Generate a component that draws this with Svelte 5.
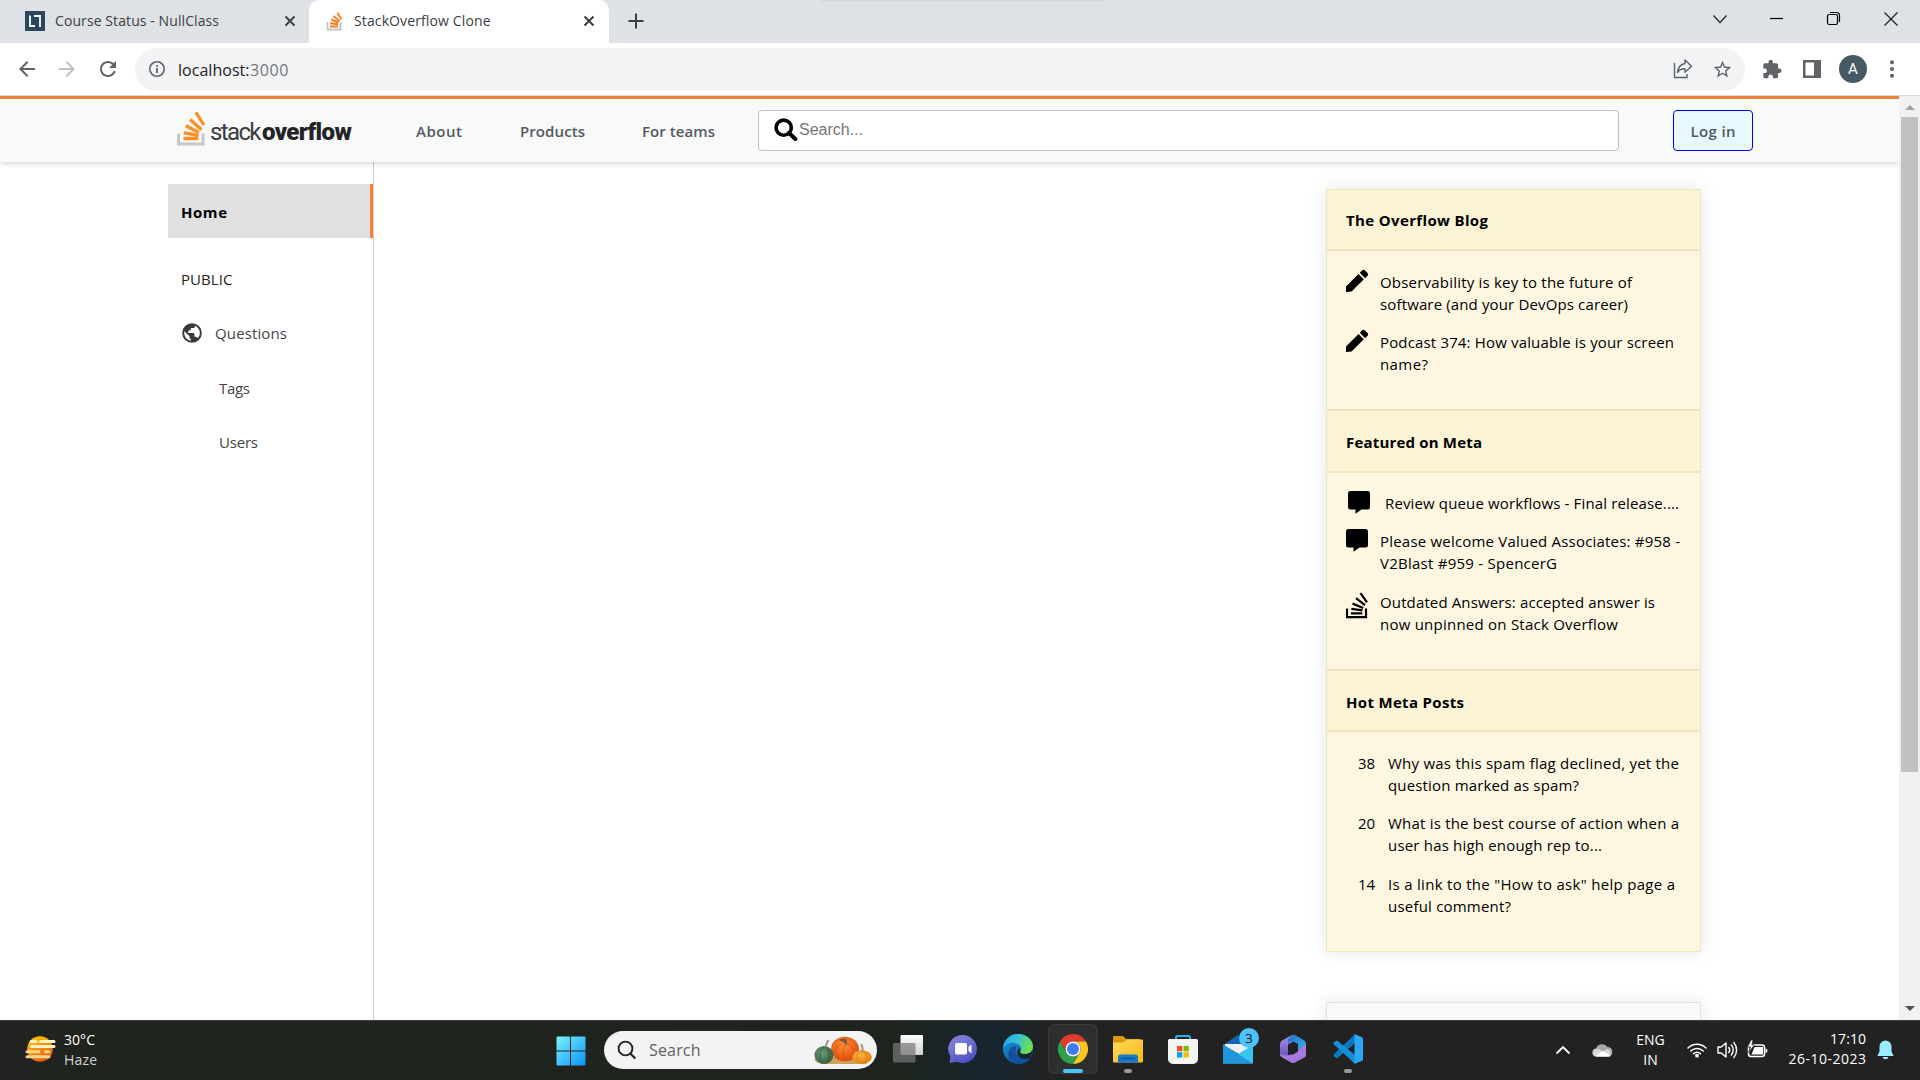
<script>
  // Spreads the letters of a single line so that it fills the given width.
  function fit(node, width) {
    const natural = node.getBoundingClientRect().width;
    const gaps = node.textContent.length - 1;
    node.style.letterSpacing = `${(width - natural) / gaps}px`;
    node.style.marginRight = `${-(width - natural) / gaps}px`;
  }

  const navLinks = [
    { label: 'About', width: 46, cls: 'about' },
    { label: 'Products', width: 65, cls: 'products' },
    { label: 'For teams', width: 73, cls: 'teams' },
  ];

  const sections = [
    {
      title: 'The Overflow Blog', width: 142, cls: 'blog',
      items: [
        { icon: 'pen', lines: [['Observability is key to the future of', 252], ['software (and your DevOps career)', 248]] },
        { icon: 'pen', lines: [['Podcast 374: How valuable is your screen', 294], ['name?', 48]] },
      ],
    },
    {
      title: 'Featured on Meta', width: 136, cls: 'meta',
      items: [
        { icon: 'comment', inset: true, lines: [['Review queue workflows - Final release....', 294]] },
        { icon: 'comment', lines: [['Please welcome Valued Associates: #958 -', 300], ['V2Blast #959 - SpencerG', 177]] },
        { icon: 'stack', lines: [['Outdated Answers: accepted answer is', 275], ['now unpinned on Stack Overflow', 238]] },
      ],
    },
    {
      title: 'Hot Meta Posts', width: 118, cls: 'hot',
      items: [
        { count: '38', lines: [['Why was this spam flag declined, yet the', 291], ['question marked as spam?', 191]] },
        { count: '20', lines: [['What is the best course of action when a', 291], ['user has high enough rep to...', 214]] },
        { count: '14', lines: [['Is a link to the "How to ask" help page a', 287], ['useful comment?', 123]] },
      ],
    },
  ];
</script>

<div class="screen">
  <header class="tabstrip">
    <div class="tab idle">
      <svg class="fav" width="20" height="20" viewBox="0 0 20 20"><rect width="20" height="20" fill="#2a475e" /><path d="M5 4.500v10.500h5M9 5h6v11" fill="none" stroke="#fff" stroke-width="1.800" /></svg>
      <span class="title"><span use:fit={164}>Course Status - NullClass</span></span>
      <svg class="x" width="12" height="12" viewBox="0 0 12 12"><path d="M1.500 1.500l9 9M10.500 1.500l-9 9" stroke="#3c4043" stroke-width="2" /></svg>
    </div>
    <div class="tab active">
      <svg class="fav so" width="20" height="20" viewBox="0 0 20 20"><path d="M2.500 11v7.500h13V11" fill="none" stroke="#c4c4c4" stroke-width="1.800" /><path d="M5 15.500h8M5 12.300l8 1M6.200 8.500l7.300 3M8.600 5l6 5.300M12.300 1.800l4.200 6.500" stroke="#f48024" stroke-width="1.900" /></svg>
      <span class="title"><span use:fit={136.5}>StackOverflow Clone</span></span>
      <svg class="x" width="12" height="12" viewBox="0 0 12 12"><path d="M1.500 1.500l9 9M10.500 1.500l-9 9" stroke="#3c4043" stroke-width="2" /></svg>
    </div>
    <svg class="plus" width="16" height="16" viewBox="0 0 16 16"><path d="M8 0.500v15M.5 8h15" stroke="#3c4043" stroke-width="2" /></svg>
    <div class="flyout"></div>
    <div class="window-buttons">
      <svg width="57" height="38" viewBox="0 0 57 38"><path d="M22.500 15.500l6.500 7 6.500-7" fill="none" stroke="#222" stroke-width="1.200" /></svg>
      <svg width="57" height="38" viewBox="0 0 57 38"><path d="M22 18.500h13" stroke="#000" stroke-width="1.200" /></svg>
      <svg width="57" height="38" viewBox="0 0 57 38"><g fill="none" stroke="#000" stroke-width="1.200"><rect x="22.500" y="14.500" width="10" height="10" rx="1.800" /><path d="M25 12.500h6.500a3 3 0 013 3V22" /></g></svg>
      <svg width="57" height="38" viewBox="0 0 57 38"><path d="M22.500 12.500l13 13M35.500 12.500l-13 13" stroke="#222" stroke-width="1.300" /></svg>
    </div>
  </header>

  <div class="toolbar">
    <svg class="tool" viewBox="0 0 24 24"><path fill="#5f6368" d="M20 11H7.830l5.590-5.590L12 4l-8 8 8 8 1.410-1.410L7.830 13H20z" /></svg>
    <svg class="tool" viewBox="0 0 24 24"><path fill="#bdc1c6" d="M4 11h12.170l-5.590-5.590L12 4l8 8-8 8-1.410-1.410L16.170 13H4z" /></svg>
    <svg class="tool reload" viewBox="0 0 24 24"><path fill="#5f6368" d="M17.650 6.350C16.200 4.900 14.210 4 12 4c-4.420 0-7.990 3.580-7.990 8s3.570 8 7.990 8c3.730 0 6.840-2.550 7.730-6h-2.080c-.82 2.330-3.040 4-5.650 4-3.310 0-6-2.690-6-6s2.690-6 6-6c1.660 0 3.140.69 4.220 1.780L13 11h7V4l-2.350 2.350z" /></svg>
    <div class="omnibox">
      <svg class="info" width="18" height="18" viewBox="0 0 18 18"><circle cx="9" cy="9" r="7.200" fill="none" stroke="#5f6368" stroke-width="1.600" /><path d="M9 8v5M9 5v1.700" stroke="#5f6368" stroke-width="1.800" /></svg>
      <span class="host"><span use:fit={71.5}>localhost:</span></span><span class="port"><span use:fit={38.5}>3000</span></span>
      <svg class="share" width="20" height="22" viewBox="0 0 20 22"><g fill="none" stroke="#5f6368" stroke-width="1.400"><path d="M1.500 5v14.500h12.500V16" /><path d="M12 2l6.500 6.200-6.500 6V10.800c-3.800 0-6.200 1.400-7.500 3.700C5 9.500 7.500 6.300 12 5.500z" stroke-linejoin="round" /></g></svg>
      <svg class="star" width="21" height="21" viewBox="0 0 24 24"><path fill="#5f6368" d="M22 9.240l-7.190-.62L12 2 9.190 8.630 2 9.240l5.460 4.730L5.820 21 12 17.270 18.180 21l-1.630-7.030L22 9.240zM12 15.400l-3.760 2.270 1-4.280-3.320-2.880 4.380-.38L12 6.100l1.710 4.040 4.380.38-3.320 2.880 1 4.280L12 15.400z" /></svg>
    </div>
    <svg class="ext" width="20" height="20" viewBox="0.500 0 23 23"><path fill="#5f6368" d="M20.500 11H19V7c0-1.100-.9-2-2-2h-4V3.500C13 2.120 11.880 1 10.500 1S8 2.120 8 3.500V5H4c-1.100 0-1.990.9-1.990 2v3.800H3.500c1.490 0 2.700 1.210 2.700 2.700s-1.210 2.700-2.700 2.700H2V20c0 1.100.9 2 2 2h3.800v-1.500c0-1.490 1.210-2.700 2.700-2.700 1.490 0 2.700 1.210 2.700 2.700V22H17c1.100 0 2-.9 2-2v-4h1.500c1.380 0 2.500-1.120 2.500-2.500S21.880 11 20.500 11z" /></svg>
    <svg class="panel" width="18" height="18" viewBox="0 0 18 18"><path fill="#5f6368" fill-rule="evenodd" d="M0 0h18v18H0zM2.500 2.500v13H11v-13z" /></svg>
    <div class="avatar">A</div>
    <svg class="dots" width="4" height="18" viewBox="0 0 4 18"><g fill="#5f6368"><circle cx="2" cy="2.200" r="2" /><circle cx="2" cy="9" r="2" /><circle cx="2" cy="15.800" r="2" /></g></svg>
  </div>

  <div class="viewport">
    <div class="page">
      <nav class="navbar">
        <div class="logo">
          <svg width="32" height="38" viewBox="0 0 32 38"><path d="M1.500 23.500v10.500H26V23.500" fill="none" stroke="#c6c6c6" stroke-width="3" /><path d="M6.500 28.500h14.800M6.800 22.800l14.700 2.600M8.800 15.800L22 22.400M13.200 9.500L24.500 19.800M19 2.500L26.800 15" stroke="#fb8f28" stroke-width="3.300" /></svg>
          <span class="word"><span use:fit={51.5}>stack</span></span><b class="word"><span use:fit={89.5}>overflow</span></b>
        </div>
        {#each navLinks as link}
          <a class="link {link.cls}"><span use:fit={link.width}>{link.label}</span></a>
        {/each}
        <div class="search">
          <svg width="24" height="24" viewBox="0 0 24 24"><circle cx="9.700" cy="9.700" r="7.600" fill="none" stroke="#000" stroke-width="3.600" /><path d="M15 15l6.300 6" stroke="#000" stroke-width="4" stroke-linecap="round" /></svg>
          <span class="placeholder"><span use:fit={64}>Search...</span></span>
        </div>
        <button class="login"><span use:fit={45}>Log in</span></button>
      </nav>

      <div class="body">
        <aside class="left">
          <div class="side home"><span use:fit={46}>Home</span></div>
          <div class="side public"><span use:fit={51.5}>PUBLIC</span></div>
          <div class="side questions">
            <svg width="22" height="22" viewBox="0 0 18 18"><path fill="#3a3a3a" d="M9 1a8 8 0 100 16A8 8 0 009 1zM8 15.320a6.400 6.400 0 01-5.230-7.750L7 11.680v.8c0 .88.12 1.320 1 1.320v1.520zm5.720-2c-.2-.66-1-1.320-1.720-1.320h-1v-2c0-.44-.56-1-1-1H6V7h1c.44 0 1-.56 1-1V5h2c.88 0 1.400-.72 1.400-1.600v-.33a6.400 6.400 0 012.320 10.240z" /></svg>
            <span use:fit={72}>Questions</span>
          </div>
          <div class="side tags"><span use:fit={31}>Tags</span></div>
          <div class="side users"><span use:fit={39}>Users</span></div>
        </aside>

        <aside class="right">
          <div class="card">
            {#each sections as section}
              <h4 class={section.cls}><span use:fit={section.width}>{section.title}</span></h4>
              <div class="content {section.cls}">
                {#each section.items as item}
                  <div class="item" class:inset={item.inset} class:counted={item.count}>
                    {#if item.icon === 'pen'}
                      <svg width="23" height="24" viewBox="0 0 23 24"><path d="M0 23v-5.500L12.500 5l5.300 5.300L5.500 22.600zM13.800 3.800L16 1.500c1-1 2-1 3 0L21.500 4c1 1 .9 2-.1 3l-2.300 2.200z" /></svg>
                    {:else if item.icon === 'comment'}
                      <svg width="23" height="24" viewBox="0 0 23 24"><path d="M2.500 1h17A2.500 2.500 0 0122 3.500V17a2.500 2.500 0 01-2.500 2.500h-6L7.500 23.800V19.500h-5A2.500 2.500 0 010 17V3.500A2.500 2.500 0 012.500 1z" /></svg>
                    {:else if item.icon === 'stack'}
                      <svg class="stack" width="23" height="28" viewBox="0 0 23 28"><path d="M1 17.500v8.700h19v-8.700M5 22.300h11.300M5.300 17.900l11.200 1.500M6.500 12.400l10.700 4.700M10 7.200l9 7M14.500 2.200l6.500 9.200" fill="none" stroke="#000" stroke-width="2.200" /></svg>
                    {:else}
                      <span class="count"><span use:fit={17}>{item.count}</span></span>
                    {/if}
                    <p>
                      {#each item.lines as [text, width]}
                        <span class="line"><span use:fit={width}>{text}</span></span>
                      {/each}
                    </p>
                  </div>
                {/each}
              </div>
            {/each}
          </div>
          <div class="card next"></div>
        </aside>
      </div>
    </div>
    <div class="scrollbar">
      <i class="up"></i>
      <div class="thumb"></div>
      <i class="down"></i>
    </div>
  </div>

  <footer class="taskbar">
    <div class="weather">
      <svg width="32" height="30" viewBox="0 0 32 30"><defs><linearGradient id="sun" x1="0" y1="0" x2=".6" y2="1"><stop offset="0" stop-color="#ffd60a" /><stop offset="1" stop-color="#e8590c" /></linearGradient></defs><circle cx="15" cy="15" r="12.800" fill="url(#sun)" /><g stroke-width="3" stroke-linecap="round"><path d="M6 7.500h5M15.500 7.500H29M6.500 12.500H29" stroke="#fff1c4" /><path d="M2 17.800h12M20.500 17.800h3.500M2 22.800h22" stroke="#f3d491" /></g></svg>
      <div><span class="w1"><span use:fit={31}>30°C</span></span><span class="w2"><span use:fit={33}>Haze</span></span></div>
    </div>

    <div class="apps">
      <svg class="win" width="30" height="30" viewBox="0 0 30 30"><defs><linearGradient id="win" x1="0" y1="0" x2="1" y2="1"><stop offset="0" stop-color="#7df3fd" /><stop offset="1" stop-color="#0893fb" /></linearGradient></defs><path fill="url(#win)" d="M1.500.500H14v14H.500v-13a1 1 0 011-1zM15 .500h13.500a1 1 0 011 1v13H15zM.500 15.500H14v14H1.500a1 1 0 01-1-1zM15 15.500h14.500v13a1 1 0 01-1 1H15z" /></svg>
      <div class="tasksearch">
        <svg width="20" height="20" viewBox="0 0 20 20"><circle cx="8.500" cy="8.500" r="6.900" fill="none" stroke="#222" stroke-width="1.900" /><path d="M13.300 13.500l5 5" stroke="#222" stroke-width="2.200" /></svg>
        <span class="ts"><span use:fit={51.5}>Search</span></span>
        <svg class="pumpkins" width="60" height="32" viewBox="0 0 60 32">
          <defs>
            <radialGradient id="po" cx=".45" cy=".35" r=".7"><stop offset="0" stop-color="#ff9238" /><stop offset="1" stop-color="#d9420b" /></radialGradient>
            <radialGradient id="pg" cx=".4" cy=".4" r=".7"><stop offset="0" stop-color="#6f9a74" /><stop offset="1" stop-color="#2f5540" /></radialGradient>
            <radialGradient id="py" cx=".4" cy=".35" r=".7"><stop offset="0" stop-color="#ffb640" /><stop offset="1" stop-color="#e27a0a" /></radialGradient>
          </defs>
          <path d="M1 25q26-6 54 4l-3 1H12Q3 30 1 25z" fill="#c9a35c" />
          <ellipse cx="32" cy="15" rx="14" ry="12.200" fill="url(#po)" />
          <path d="M29 10c-8 2-8 12-3 16M32 10c-2 5-2 12 0 17M34 10c8 2 8 12 4 16" fill="none" stroke="#dd5010" stroke-width=".8" />
          <path d="M27 6q3 0 6 4 1-3-1-5z" fill="#8d6b4d" stroke="#78573c" stroke-width="1.500" />
          <ellipse cx="11" cy="21" rx="9.500" ry="9" fill="url(#pg)" />
          <path d="M11 13c-5 4-5 12-1 17M13 13c4 4 4 12 0 17" fill="none" stroke="#315a42" stroke-width=".8" />
          <path d="M12.500 13q1-4 3-7" stroke="#a89080" stroke-width="2" fill="none" />
          <ellipse cx="49" cy="23" rx="9.800" ry="6.800" fill="url(#py)" />
          <path d="M48 17c-5 3-5 9-1 12M50 17c5 3 5 9 1 12" fill="none" stroke="#db780f" stroke-width=".8" />
          <path d="M49.500 18q.5-4-1-8" stroke="#b18c70" stroke-width="2" fill="none" />
        </svg>
      </div>
      <svg class="app" viewBox="0 0 36 36"><defs><linearGradient id="tv" x1="0" y1="0" x2="0" y2="1"><stop offset="0" stop-color="#fff" /><stop offset="1" stop-color="#d0d0d0" /></linearGradient></defs><rect x="10.500" y="4" width="22.500" height="20" rx="1" fill="url(#tv)" /><rect x="3" y="12" width="22.500" height="19.500" rx="1" fill="#777" opacity=".72" /></svg>
      <svg class="app" viewBox="0 0 36 36"><defs><linearGradient id="chat" x1="0" y1="0" x2=".6" y2="1"><stop offset="0" stop-color="#a06fb8" /><stop offset=".35" stop-color="#7679dc" /><stop offset="1" stop-color="#4d50c3" /></linearGradient></defs><path d="M18 4a14 14 0 11-6 26.700L4.500 32l1-6.500A14 14 0 0118 4z" fill="url(#chat)" /><rect x="10" y="12" width="12" height="11.500" rx="1.800" fill="#fff" /><path d="M23.500 16l3-2.500v9l-3-2.500z" fill="#fff" /></svg>
      <svg class="app" viewBox="0 0 36 36"><defs><linearGradient id="e1" x1="0" y1="0" x2="1" y2=".35"><stop offset="0" stop-color="#1fa2e8" /><stop offset=".5" stop-color="#35c1d8" /><stop offset="1" stop-color="#6be04e" /></linearGradient><linearGradient id="e2" x1="0" y1="0" x2=".5" y2="1"><stop offset="0" stop-color="#1c9be0" /><stop offset="1" stop-color="#0c59a4" /></linearGradient></defs><circle cx="18" cy="18" r="15" fill="url(#e2)" /><path d="M15.500 20c0 6 6 9.500 13 7.300l1.500.2C27 31.500 22 33.500 17 33c-6-1-9.500-6-8.500-11 .5-4 4-7 7.500-7z" fill="#124f9c" /><path d="M3 17C3.500 9 10 3 18 3c9 0 15 6 15 12.500 0 5-4 7.500-8 7.500-4 0-6-1.500-4.500-3.200 1-1.300 1-3.300-.5-5C16.500 10.500 7 10 3 17z" fill="url(#e1)" /><path d="M20.500 19.800c-1.500 1.700.5 3.200 4.500 3.200 3.500 0 6.500-1.500 7.700-4.500l-.5 4c-1 3-2.500 4.500-4 5.300-5 1-11-.8-11-6.300 0-2 1-3.500 2-4.500 1 .8 1.800 2 1.300 2.800z" fill="#17272f" /></svg>
      <div class="running current">
        <svg class="app" viewBox="0 0 36 36"><path d="M5 10.500A15 15 0 0131 10.500H18a7.500 7.500 0 00-6.500 11.250z" fill="#e33b2e" /><path d="M31 10.500A15 15 0 0118 33l6.500-11.250A7.500 7.500 0 0018 10.500z" fill="#fcc522" /><path d="M18 33A15 15 0 015 10.500l6.500 11.250a7.500 7.500 0 0013 0z" fill="#2da14b" /><circle cx="18" cy="18" r="7.500" fill="#fff" /><circle cx="18" cy="18" r="6" fill="#3b7ded" /></svg>
        <i></i>
      </div>
      <div class="running">
        <svg class="app" viewBox="0 0 36 36"><defs><linearGradient id="fo" x1="0" y1="0" x2="1" y2="1"><stop offset="0" stop-color="#ffda63" /><stop offset="1" stop-color="#f9b80e" /></linearGradient></defs><path d="M3 6a1 1 0 011-1h9l3 3h14v6H3z" fill="#d99a0b" /><path d="M3 11.500h10.500L17 8.500h15a1 1 0 011 1v21a1 1 0 01-1 1H4a1 1 0 01-1-1z" fill="url(#fo)" /><path d="M8 31.500V26a2.500 2.500 0 012.500-2.500h15A2.500 2.500 0 0128 26v5.500z" fill="#1579c8" /><path d="M11.500 27.500h13" stroke="#0b4f94" stroke-width="1.300" /></svg>
        <i></i>
      </div>
      <svg class="app" viewBox="0 0 36 36"><path d="M11 10V6.500A1.500 1.500 0 0112.500 5h11A1.500 1.500 0 0125 6.500V10" fill="none" stroke="#29b2ea" stroke-width="2" /><path d="M3 9.500A1.500 1.500 0 014.500 8h27A1.500 1.500 0 0133 9.500V28a5 5 0 01-5 5H8a5 5 0 01-5-5z" fill="#f4f4f4" /><path d="M12 15h5.300v5.300H12z" fill="#f25022" /><path d="M18.500 15h5.300v5.300h-5.300z" fill="#7fba00" /><path d="M12 21.200h5.300v5.300H12z" fill="#00a4ef" /><path d="M18.500 21.200h5.300v5.300h-5.300z" fill="#ffb900" /></svg>
      <div class="mail">
        <svg class="app" viewBox="0 0 36 36"><path d="M3 14L18 4l15 10v5H3z" fill="#1464b4" /><path d="M5 13h26v5L19 23 5 15z" fill="#efefef" /><path d="M3 13.500L18 23 33 14v17.500a1 1 0 01-1 1H3z" fill="#36c5f5" /><path d="M3 13.500L33 32.500H4a1 1 0 01-1-1z" fill="#1e95dd" /></svg>
        <b>3</b>
      </div>
      <svg class="app" viewBox="0 0 36 36"><defs><linearGradient id="m1" x1="0" y1="0" x2="0" y2="1"><stop offset="0" stop-color="#b28be8" /><stop offset="1" stop-color="#5a4fb8" /></linearGradient><linearGradient id="m2" x1="0" y1="0" x2="1" y2="1"><stop offset="0" stop-color="#1c6fc4" /><stop offset="1" stop-color="#3fb8f2" /></linearGradient></defs><path d="M17 4L7 9.500Q5 10.500 5 13v11l8 4V13.500L19 10z" fill="url(#m1)" /><path d="M17 4q1.500-.6 3 0l9 5.200q2 1.300 2 3.500V24l-8-5v-6l-6-3-4 2.500V8z" fill="url(#m2)" /><path d="M5 23l6 1.500 6-1 6-4 8-6.500v11q0 1.500-1.500 2.500L20 31.500q-2 1-4 0L6.500 26Q5 25 5 23z" fill="#a678dc" /><path d="M18 12.500l4.800 2.800v5.500L18 23.500l-4.800-2.700v-5.500z" fill="#202226" /></svg>
      <div class="running">
        <svg class="app" viewBox="0 0 36 36"><path d="M25 3.200v9L7 27.500 3.500 25Q3 24 4 23z" fill="#0b78be" /><path d="M25 33v-9L7 9.500 3.500 11.500Q3 12.500 4 13.500z" fill="#1590d8" /><path d="M24.500 3l7.500 3.300a1.500 1.500 0 011 1.500v20.400a1.500 1.500 0 01-1 1.500L24.500 33z" fill="#2aa8f6" /></svg>
        <i></i>
      </div>
    </div>

    <div class="tray">
      <svg class="chev" width="16" height="10" viewBox="0 0 16 10"><path d="M1.500 8.500L8 2l6.500 6.500" fill="none" stroke="#fff" stroke-width="1.800" /></svg>
      <svg class="cloud" width="21" height="14" viewBox="0 0 21 14"><path d="M4.500 13.500a4 4 0 01-.5-8A6.500 6.500 0 0115.500 4a4.800 4.800 0 011 9.500z" fill="#a8a8a8" /><path d="M4.500 13.500a3.700 3.700 0 01-1.500-7L6 5.500l5 3 4.500-2.500a4 4 0 011 7.500z" fill="#d8d8d8" /><path d="M3 13l8-5 8 5q-1 .6-3 .6H5z" fill="#fff" /></svg>
      <div class="lang"><span><span use:fit={28.5}>ENG</span></span><span><span use:fit={14.5}>IN</span></span></div>
      <svg class="wifi" width="20" height="16" viewBox="0 0 20 16"><g fill="none" stroke="#fff" stroke-width="1.500" stroke-linecap="round"><path d="M1 6a12.700 12.700 0 0118 0M3.800 9a8.700 8.700 0 0112.400 0M6.600 11.600a4.800 4.800 0 016.800 0" /></g><circle cx="10" cy="13.700" r="1.900" fill="#fff" /></svg>
      <svg class="vol" width="21" height="18" viewBox="0 0 21 18"><g fill="none" stroke="#fff" stroke-width="1.400" stroke-linecap="round" stroke-linejoin="round"><path d="M1 6h3.200L9 2v14l-4.800-4H1zM11.800 6.500a4 4 0 010 5M14.300 4a7.500 7.500 0 010 10M16.800 1.500a11.500 11.500 0 010 15" /></g></svg>
      <svg class="bat" width="21" height="18" viewBox="0 0 21 18"><rect x="1.500" y="5" width="16" height="11.500" rx="2.500" fill="none" stroke="#fff" stroke-width="1.500" /><path d="M7.500 7H16v7.500H4.500z" fill="#fff" /><path d="M18.500 8.500q2 0 2 2.300t-2 2.300z" fill="#fff" /><path d="M4 0L.5 7h3L1.500 12.500 7.500 5H5l1-5z" fill="#fff" stroke="#222" stroke-width=".7" /></svg>
      <div class="clock"><span><span use:fit={36}>17:10</span></span><span><span use:fit={77.5}>26-10-2023</span></span></div>
      <svg class="bell" width="17" height="20" viewBox="0 0 17 20"><path d="M8.500.500a6 6 0 016 6v5l2.200 4.500H.3l2.200-4.500v-5a6 6 0 016-6zM5.500 17h6q-.6 2.200-3 2.200t-3-2.200z" fill="#99ebff" /></svg>
    </div>
  </footer>
</div>

<style>
  :global(body) { overflow: hidden; }
  .screen { width: 1920px; height: 1080px; display: flex; flex-direction: column; background: #fff; overflow: hidden; font-family: "Open Sans", "Noto Sans", sans-serif; font-size: 15px; }
  .screen * { box-sizing: border-box; }
  svg { display: block; flex: none; }
  span { white-space: nowrap; }

  .tabstrip { height: 43px; flex: none; display: flex; background: #dee1e6; color: #3c4043; }
  .tab { display: flex; align-items: center; height: 43px; padding-bottom: 1px; font-size: 14px; }
  .idle { width: 309px; padding-left: 25px; border-radius: 0 0 10px 0; }
  .active { width: 300px; padding-left: 16px; background: #fff; border-radius: 10px 10px 0 0; }
  .title { width: 239px; padding-left: 10px; padding-bottom: 2px; flex: none; }
  .active .title { padding-left: 9px; width: 238px; }
  .plus { margin: 13px 0 0 19px; }
  .flyout { width: 285px; height: 1px; margin-left: 177px; background: #d3d6db; box-shadow: 0 0 5px #d0d3d8; }
  .window-buttons { display: flex; margin-left: auto; padding-right: 1px; }

  .toolbar { height: 53px; flex: none; display: flex; align-items: center; padding-left: 15px; border-bottom: 1px solid #d9dbde; }
  .tool { width: 24px; height: 24px; margin-right: 16px; }
  .reload { margin-left: 1px; margin-right: 15px; }
  .omnibox { width: 1610px; height: 43px; border-radius: 22px; background: #f1f3f4; display: flex; align-items: center; padding-left: 13px; font-size: 16px; }
  .info { margin-right: 12px; }
  .host { width: 72px; color: #202124; padding-top: 1px; }
  .port { color: #73777b; padding-top: 1px; }
  .share { margin-left: auto; margin-right: 19px; }
  .star { margin-right: 12px; }
  .ext { margin-left: 17px; }
  .panel { margin-left: 21px; }
  .avatar { width: 28px; height: 28px; margin-left: 18px; border-radius: 50%; background: #455a64; color: #fff; font: 15px/28px Roboto, sans-serif; text-align: center; }
  .dots { margin-left: 23px; }

  .viewport { height: 924px; flex: none; display: flex; overflow: hidden; }
  .page { width: 1899px; display: flex; flex-direction: column; overflow: hidden; }
  .navbar { height: 66px; flex: none; position: relative; z-index: 1; display: flex; align-items: center; padding-left: 177px; border-top: 3px solid #ef8236; background: #f8f9f9; box-shadow: 0 1px 6px rgba(0, 0, 0, .2); color: #525960; font-weight: 600; font-size: 15px; }
  .logo { width: 239px; height: 40px; display: flex; align-items: center; color: #222426; margin-top: -3px; }
  .word { font: 400 24px/30px Roboto, sans-serif; padding-top: 5px; }
  .logo svg + .word { width: 53px; padding-left: 1px; color: #3a3c3e; }
  b.word { font-weight: 900; }
  .link { padding-top: 1px; }
  .about { width: 104px; }
  .products { width: 122px; }
  .teams { width: 116px; }
  .search { width: 861px; height: 41px; margin-bottom: 1px; display: flex; align-items: center; padding-left: 15px; background: #fff; border: 1px solid #bbc0c4; border-radius: 4px; }
  .placeholder { font: 400 16px/20px "Liberation Sans", Arial, sans-serif; color: #757575; padding-left: 1px; }
  .login { width: 80px; height: 41px; margin-bottom: 1px; margin-left: 54px; padding: 1px 0 0; border: 1px solid #0000f5; border-radius: 4px; background: #e7f8fe; font: inherit; color: #525960; }

  .body { flex: 1; display: flex; }
  .left { width: 374px; padding: 22px 0 0 168px; border-right: 1px solid #ccc; color: #444; font-size: 15px; }
  .side { height: 54px; display: flex; align-items: center; padding-left: 13px; padding-top: 1px; }
  .home { background: #e0e0e0; border-right: 3px solid #f48236; font-weight: 700; color: #000; }
  .public { margin-top: 13px; color: #222; }
  .questions svg { margin-right: 12px; }
  .tags, .users { padding-left: 51px; padding-top: 3px; }

  .right { width: 375px; margin: 27px 198px 0 auto; }
  .card { box-shadow: 0 0 18px rgba(0, 0, 0, .1); }
  h4 { height: 61px; margin: 0; padding: 1px 0 0 19px; display: flex; align-items: center; border: 1px solid #f1e5bc; background: #fbf3d5; font-size: 15px; font-weight: 700; }
  h4.meta { height: 62px; padding-top: 2px; }
  h4.hot { padding-top: 2px; }
  .content { border: 1px solid #f1e5bc; background: #fdf7e2; padding: 21px 0 0 19px; display: flex; flex-direction: column; gap: 16.400px; }
  .content.blog { height: 160px; }
  .content.meta { height: 198px; padding-top: 20px; }
  .content.hot { height: 221px; }
  .item { display: flex; align-items: flex-start; gap: 11px; }
  .item svg { margin: -3px 0 -6px; }
  .item svg.stack { margin-top: -1px; }
  .inset { padding-left: 2px; gap: 14px; }
  .counted { padding-left: 12px; gap: 0; }
  .count { width: 30px; line-height: 22px; margin-top: -1px; }
  p { margin: -1px 0 1px; }
  .line { display: block; line-height: 22px; height: 22px; }
  .next { height: 120px; margin-top: 50px; background: #f8f9f9; border: 1px solid #dfe2e5; }

  .scrollbar { width: 21px; background: #f1f1f1; display: flex; flex-direction: column; align-items: center; }
  .up, .down { width: 0; height: 0; border: 5px solid transparent; }
  .up { margin-top: 4px; border-bottom-color: #a3a3a3; }
  .thumb { width: 17px; height: 655px; margin-top: 7px; background: #c1c1c1; }
  .down { margin-top: auto; margin-bottom: 4px; border-top-color: #505050; }

  .taskbar { height: 60px; flex: none; display: flex; border-top: 1px solid #3c413e; color: #fff; background: linear-gradient(90deg, #20231f 0, #1f241e 300px, #1e241d 900px, #17252e 985px, #17262e 1000px, #222 1050px, #222); }
  .weather { width: 556px; display: flex; padding: 13px 0 0 25px; }
  .weather > div { margin-left: 7px; display: flex; flex-direction: column; margin-top: -4px; font-size: 14px; line-height: 20px; }
  .w2 { color: #d0d0d0; }
  .apps { display: flex; align-items: center; height: 56px; }
  .tasksearch { width: 273px; height: 38px; margin: 1px 13px 0 18px; border-radius: 19px; background: #f3f3f3; display: flex; align-items: center; padding-left: 13px; color: #606060; font-size: 16px; }
  .ts { width: 175px; padding-left: 12px; padding-top: 1px; }
  .pumpkins { margin-left: 1px; }
  .win { margin-top: 3px; }
  .app { width: 36px; height: 36px; margin-right: 19px; }
  .running { width: 50px; height: 50px; margin-right: 12px; margin-left: -7px; display: flex; flex-direction: column; align-items: center; padding-top: 7px; border-radius: 6px; }
  .running .app { margin: 0; }
  .running i { width: 8px; height: 4px; margin-top: 2px; border-radius: 2px; background: #9a9a9a; }
  .current { background: #2e2f2f; box-shadow: inset 0 0 0 1px #393939; }
  .current i { width: 20px; background: #4cc2ff; }
  .mail { position: relative; }
  .mail b { position: absolute; left: 19px; top: -3px; width: 20px; height: 20px; border-radius: 50%; background: #4cc2ff; color: #111; font-size: 13px; line-height: 20px; font-weight: 400; text-align: center; }
  .tray { margin-left: auto; display: flex; align-items: center; padding-right: 26px; height: 58px; font-size: 14px; line-height: 20px; }
  .chev { margin-right: 21px; }
  .cloud { margin-right: 23px; }
  .lang { width: 29px; display: flex; flex-direction: column; align-items: center; margin-right: 22px; }
  .wifi { margin-right: 10px; }
  .vol { margin-right: 9px; }
  .bat { margin-top: -3px; }
  .clock { width: 98px; display: flex; flex-direction: column; align-items: flex-end; margin-top: -2px; margin-right: 11px; }
</style>
